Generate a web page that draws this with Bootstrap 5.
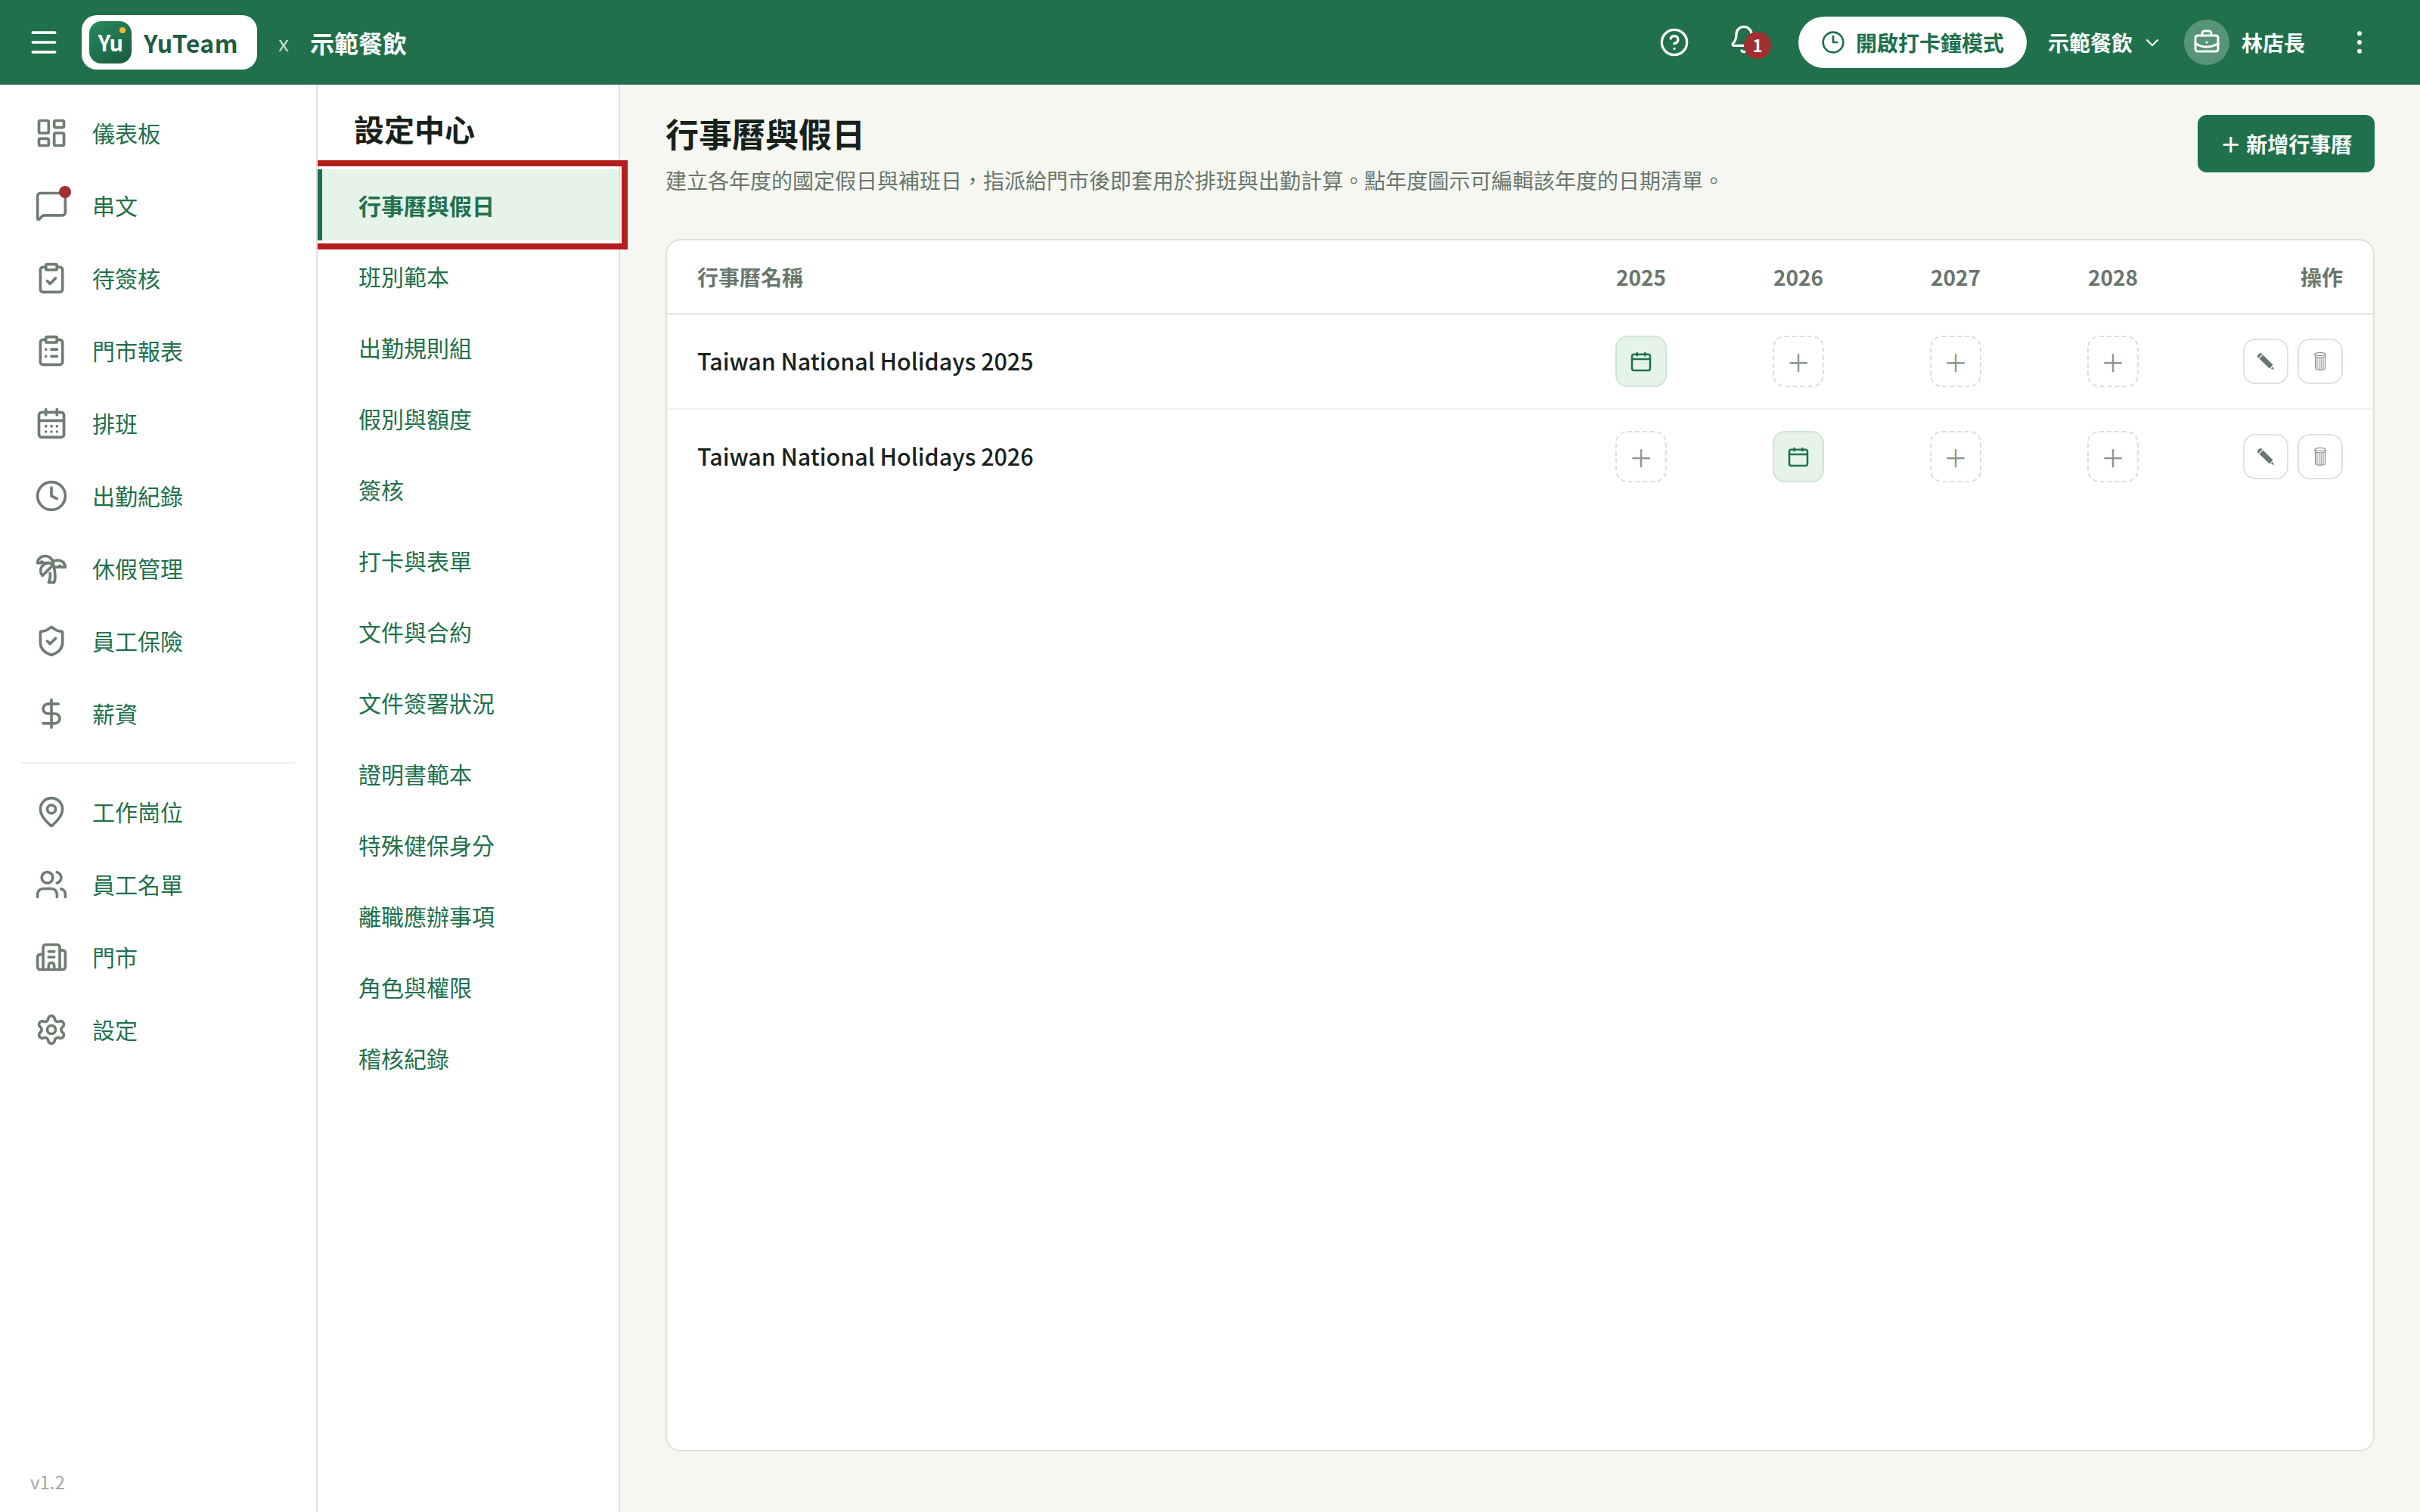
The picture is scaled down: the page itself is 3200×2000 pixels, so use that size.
<!DOCTYPE html>
<html lang="zh-Hant">
<head>
<meta charset="utf-8">
<title>行事曆與假日 - YuTeam</title>
<meta name="viewport" content="width=device-width, initial-scale=1">
<link rel="stylesheet" href="https://cdn.jsdelivr.net/npm/bootstrap@5.3.0/dist/css/bootstrap.min.css">
<style>
:root{--brand:#20704c;--ink:#17211b;--muted:#69766c;--line:#dce4da;--soft:#e6f3ea}
html{font-size:32px}
body{font-family:"Noto Sans CJK TC","Noto Sans",sans-serif;font-size:30px;line-height:1.5;color:var(--ink);background:#f6f7f2;height:2000px;overflow:hidden}
svg.ico{fill:none;stroke:currentColor;stroke-width:2;stroke-linecap:round;stroke-linejoin:round;width:44px;height:44px;flex:none;display:block}
.topbar{height:112px;background:var(--brand);color:#fff;padding:0 60px 0 36px;flex:none}
.brandbox{height:72px;width:232px;background:#fff;border-radius:20px;margin-left:28px;padding-left:10px}
.brandmark{width:56px;height:56px;border-radius:16px;background:linear-gradient(145deg,#268a5f,#1b5a3c);font-size:29px;font-weight:700;letter-spacing:-.5px}
.branddot{position:absolute;width:8px;height:8px;border-radius:50%;background:#f2b940;right:8px;top:8px}
.brandname{color:#1b5e41;font-weight:700;font-size:32px;letter-spacing:.5px;margin-left:16px}
.times{margin-left:28px;font-size:28px;color:#c7dbd1}
.tenant{margin-left:28px;font-size:32px}
.clockbtn{height:68px;width:302px;gap:14px;background:#fff;color:var(--brand);border-radius:34px;font-weight:700;font-size:28px}
.bell{margin:0 52px}
.bell .ico{margin-top:-8px}
.count{position:absolute;left:20px;top:2px;width:36px;height:36px;border-radius:50%;background:#a12f2f;font-size:22px;font-weight:700;line-height:35px;text-align:center}
.avatar{width:60px;height:60px;border-radius:50%;background:rgba(255,255,255,.25);margin:0 16px 0 30px}
.topbar b.user{font-size:28px}
.company{margin:0 14px 0 28px}
.more{margin-left:52px}
svg.s40{width:40px;height:40px}svg.s36{width:36px;height:36px}svg.s32{width:32px;height:32px}svg.s24{width:24px;height:24px}
.side{width:420px;border-right:2px solid var(--line);background:#fff;padding:16px 28px 0;flex:none}
.side a{height:96px;display:flex;align-items:center;gap:32px;padding:0 0 2px 18px;color:var(--brand);text-decoration:none}
.side .ico{color:#6f7c72;margin-top:2px}
.side hr{margin:16px 0;border:0;border-top:2px solid #eef0ee;opacity:1}
.ver{font-size:24px;line-height:36px;color:#a4aaa5;padding:0 0 22px 12px}
.reddot{position:absolute;width:16px;height:16px;border-radius:50%;background:#a12f2f;right:-4px;top:-2px}
.sub{width:400px;border-right:2px solid var(--line);background:#fff;flex:none}
.sub h2{font-size:40px;font-weight:700;line-height:60px;margin:28px 0 24px 48px}
.sub a{height:94px;display:flex;align-items:center;padding-left:54px;color:var(--brand);text-decoration:none}
.sub a.current{background:var(--soft);border-left:6px solid var(--brand);padding-left:48px;font-weight:700;outline:8px solid #b71c1c;outline-offset:4px;clip-path:inset(-12px -14px -12px 0);position:relative}
.page-main{padding:40px 60px 80px}
.page-main h1{font-size:44px;font-weight:700;line-height:52px;margin:-2px 0 0}
.desc{font-size:28px;line-height:42px;color:var(--muted);margin:15px 0 57px}
.addbtn{width:234px;height:76px;border-radius:12px;background:var(--brand);color:#fff;font-size:28px;font-weight:700;flex:none}
.panel{border:2px solid var(--line);border-radius:20px;background:#fff}
.line{display:grid;grid-template-columns:1fr 208px 208px 208px 208px 200px;align-items:center;padding:0 40px;height:126px;border-bottom:2px solid #eef0ee}
.line:last-child{border-color:transparent}
.line.top{height:98px;border-color:var(--line);color:var(--muted);font-size:28px;font-weight:700}
.calname{font-size:30.4px;font-weight:500}
.cellbox{width:68px;height:68px;border-radius:16px;border:2px dashed #dcdfd8;color:#8a938c;font-size:32px;font-weight:400}
.cellbox.on{border:2px solid #cde6d8;background:var(--soft);color:var(--brand)}
.cellbox.on .ico{stroke-width:1.9;stroke-linecap:butt}
.ops{gap:12px}
.opbtn{width:60px;height:60px;border-radius:16px;border:2px solid var(--line);color:var(--muted)}
</style>
<script src="https://cdn.jsdelivr.net/npm/bootstrap@5.3.0/dist/js/bootstrap.bundle.min.js"></script>
</head>
<body class="d-flex flex-column">
<header class="topbar d-flex align-items-center">
  <svg class="ico" viewBox="0 0 24 24"><path d="M4 5h16M4 12h16M4 19h16"/></svg>
  <div class="brandbox d-flex align-items-center">
    <div class="brandmark d-flex align-items-center justify-content-center position-relative">Yu<i class="branddot"></i></div>
    <span class="brandname">YuTeam</span>
  </div>
  <span class="times">x</span>
  <b class="tenant">示範餐飲</b>
  <div class="d-flex align-items-center ms-auto">
    <svg class="ico s40" viewBox="0 0 24 24"><circle cx="12" cy="12" r="10"/><path d="M9.09 9a3 3 0 0 1 5.83 1c0 2-3 3-3 3M12 17h.01"/></svg>
    <div class="bell position-relative"><svg class="ico s40" viewBox="0 0 24 24"><path d="M10.268 21a2 2 0 0 0 3.464 0M3.262 15.326A1 1 0 0 0 4 17h16a1 1 0 0 0 .74-1.673C19.41 13.956 18 12.499 18 8A6 6 0 0 0 6 8c0 4.499-1.411 5.956-2.738 7.326"/></svg><span class="count">1</span></div>
    <div class="clockbtn d-flex align-items-center justify-content-center"><svg class="ico s32" viewBox="0 0 24 24"><circle cx="12" cy="12" r="10"/><path d="M12 6v6h4"/></svg>開啟打卡鐘模式</div>
    <b class="user company">示範餐飲</b>
    <svg class="ico s24" viewBox="0 0 24 24"><path d="m5 9 7 7 7-7"/></svg>
    <div class="avatar d-flex align-items-center justify-content-center"><svg class="ico s36" viewBox="0 0 24 24"><path d="M12 12h.01M16 6V4a2 2 0 0 0-2-2h-4a2 2 0 0 0-2 2v2M22 13a18.15 18.15 0 0 1-20 0"/><rect width="20" height="14" x="2" y="6" rx="2"/></svg></div>
    <b class="user">林店長</b>
    <svg class="ico s40 more" viewBox="0 0 24 24"><g fill="currentColor" stroke-width="1.6"><circle cx="12" cy="5" r="1"/><circle cx="12" cy="12" r="1"/><circle cx="12" cy="19" r="1"/></g></svg>
  </div>
</header>
<div class="d-flex flex-grow-1">
<nav class="side d-flex flex-column">
  <a href="#"><svg class="ico" viewBox="0 0 24 24"><rect width="7" height="9" x="3" y="3" rx="1"/><rect width="7" height="5" x="14" y="3" rx="1"/><rect width="7" height="9" x="14" y="12" rx="1"/><rect width="7" height="5" x="3" y="16" rx="1"/></svg>儀表板</a>
  <a href="#"><span class="position-relative"><svg class="ico" viewBox="0 0 24 24"><path d="M22 17a2 2 0 0 1-2 2H6.828a2 2 0 0 0-1.414.586l-2.202 2.202A.71.71 0 0 1 2 21.286V5a2 2 0 0 1 2-2h16a2 2 0 0 1 2 2z"/></svg><i class="reddot"></i></span>串文</a>
  <a href="#"><svg class="ico" viewBox="0 0 24 24"><rect width="8" height="4" x="8" y="2" rx="1"/><path d="M16 4h2a2 2 0 0 1 2 2v14a2 2 0 0 1-2 2H6a2 2 0 0 1-2-2V6a2 2 0 0 1 2-2h2M9 14l2 2 4-4"/></svg>待簽核</a>
  <a href="#"><svg class="ico" viewBox="0 0 24 24"><rect width="8" height="4" x="8" y="2" rx="1"/><path d="M16 4h2a2 2 0 0 1 2 2v14a2 2 0 0 1-2 2H6a2 2 0 0 1-2-2V6a2 2 0 0 1 2-2h2M12 11h4M12 16h4M8 11h.01M8 16h.01"/></svg>門市報表</a>
  <a href="#"><svg class="ico" viewBox="0 0 24 24"><path d="M8 2v4M16 2v4M3 10h18M8 14h.01M12 14h.01M16 14h.01M8 18h.01M12 18h.01M16 18h.01"/><rect width="18" height="18" x="3" y="4" rx="2"/></svg>排班</a>
  <a href="#"><svg class="ico" viewBox="0 0 24 24"><circle cx="12" cy="12" r="10"/><path d="M12 6v6l4 2"/></svg>出勤紀錄</a>
  <a href="#"><svg class="ico" viewBox="0 0 24 24"><path d="M13 8c0-2.76-2.46-5-5.5-5S2 5.24 2 8h2l1-1 1 1h4"/><path d="M13 7.14A5.82 5.82 0 0 1 16.5 6c3.04 0 5.5 2.24 5.5 5h-3l-1-1-1 1h-3"/><path d="M5.89 9.71c-2.15 2.15-2.3 5.47-.35 7.43l4.24-4.25.7-.7.71-.71 2.12-2.12c-1.95-1.96-5.27-1.8-7.42.35"/><path d="M11 15.5c.5 2.5-.17 4.5-1 6.5h4c2-5.5-.5-12-1-14"/></svg>休假管理</a>
  <a href="#"><svg class="ico" viewBox="0 0 24 24"><path d="M20 13c0 5-3.5 7.5-7.66 8.95a1 1 0 0 1-.67-.01C7.5 20.5 4 18 4 13V6a1 1 0 0 1 1-1c2 0 4.5-1.2 6.24-2.72a1.17 1.17 0 0 1 1.52 0C14.51 3.81 17 5 19 5a1 1 0 0 1 1 1z"/><path d="m9 12 2 2 4-4"/></svg>員工保險</a>
  <a href="#"><svg class="ico" viewBox="0 0 24 24"><path d="M12 2v20M17 5H9.5a3.5 3.5 0 0 0 0 7h5a3.5 3.5 0 0 1 0 7H6"/></svg>薪資</a>
  <hr>
  <a href="#"><svg class="ico" viewBox="0 0 24 24"><path d="M20 10c0 4.993-5.539 10.193-7.399 11.799a1 1 0 0 1-1.202 0C9.539 20.193 4 14.993 4 10a8 8 0 0 1 16 0"/><circle cx="12" cy="10" r="3"/></svg>工作崗位</a>
  <a href="#"><svg class="ico" viewBox="0 0 24 24"><path d="M16 21v-2a4 4 0 0 0-4-4H6a4 4 0 0 0-4 4v2M16 3.128a4 4 0 0 1 0 7.744M22 21v-2a4 4 0 0 0-3-3.87"/><circle cx="9" cy="7" r="4"/></svg>員工名單</a>
  <a href="#"><svg class="ico" viewBox="0 0 24 24"><path d="M10 12h4M10 8h4M14 21v-3a2 2 0 0 0-4 0v3M6 10H4a2 2 0 0 0-2 2v7a2 2 0 0 0 2 2h16a2 2 0 0 0 2-2V9a2 2 0 0 0-2-2h-2M6 21V5a2 2 0 0 1 2-2h8a2 2 0 0 1 2 2v16"/></svg>門市</a>
  <a href="#"><svg class="ico" viewBox="0 0 24 24"><path d="M9.671 4.136a2.34 2.34 0 0 1 4.659 0 2.34 2.34 0 0 0 3.319 1.915 2.34 2.34 0 0 1 2.33 4.033 2.34 2.34 0 0 0 0 3.831 2.34 2.34 0 0 1-2.33 4.033 2.34 2.34 0 0 0-3.319 1.915 2.34 2.34 0 0 1-4.659 0 2.34 2.34 0 0 0-3.32-1.915 2.34 2.34 0 0 1-2.33-4.033 2.34 2.34 0 0 0 0-3.831A2.34 2.34 0 0 1 6.35 6.051a2.34 2.34 0 0 0 3.319-1.915"/><circle cx="12" cy="12" r="3"/></svg>設定</a>
  <span class="ver mt-auto">v1.2</span>
</nav>
<nav class="sub">
  <h2>設定中心</h2>
  <a class="current" href="#">行事曆與假日</a>
  <a href="#">班別範本</a><a href="#">出勤規則組</a><a href="#">假別與額度</a><a href="#">簽核</a><a href="#">打卡與表單</a><a href="#">文件與合約</a><a href="#">文件簽署狀況</a><a href="#">證明書範本</a><a href="#">特殊健保身分</a><a href="#">離職應辦事項</a><a href="#">角色與權限</a><a href="#">稽核紀錄</a>
</nav>
<main class="page-main flex-grow-1 d-flex flex-column">
  <div class="d-flex justify-content-between align-items-start">
    <div><h1>行事曆與假日</h1><p class="desc">建立各年度的國定假日與補班日，指派給門市後即套用於排班與出勤計算。點年度圖示可編輯該年度的日期清單。</p></div>
    <div class="addbtn d-flex align-items-center justify-content-center">＋ 新增行事曆</div>
  </div>
  <section class="panel flex-grow-1" id="panel">
    <div class="line top"><span>行事曆名稱</span><span class="text-center">2025</span><span class="text-center">2026</span><span class="text-center">2027</span><span class="text-center">2028</span><span class="text-end">操作</span></div>
  </section>
</main>
</div>
<script>
const cal='<div class="cellbox on mx-auto d-flex align-items-center justify-content-center"><svg class="ico s32" viewBox="0 0 24 24"><path d="M8 3v4M16 3v4M3 9.7h18"/><rect width="18" height="16" x="3" y="5" rx="2"/></svg></div>';
const add='<div class="cellbox mx-auto d-flex align-items-center justify-content-center">＋</div>';
const pen='<svg width="24" height="24" viewBox="0 0 24 24" fill="currentColor"><path d="M1 6.5C.5 3.5 3 .8 6.5 1.2L7.5 2.4 2.300 7.7zM8.500 3.500 21.500 16.500 17 21.500 3.500 8.600z"/><path d="M21.300 18.700 23 23.200 18.800 21.500z"/></svg>';
const bin='<svg width="18" height="26" viewBox="0 0 18 26" fill="none" stroke="currentColor" stroke-width="1"><ellipse cx="9" cy="3.500" rx="7" ry="2"/><path d="M2 3.500v2.500c0 2.700 14 2.700 14 0V3.500M2.500 7v15.500c0 2.300 13 2.300 13 0V7"/><path stroke="#9da8ae" stroke-width="1.300" d="M5 8.500v14.500M7.700 9v15M10.300 9v15M13 8.500v14.500"/></svg>';
[2025,2026].forEach(y=>{
  document.getElementById('panel').insertAdjacentHTML('beforeend','<div class="line"><span class="calname">Taiwan National Holidays '+y+'</span>'+[2025,2026,2027,2028].map(c=>c===y?cal:add).join('')+'<div class="ops d-flex justify-content-end"><span class="opbtn d-flex align-items-center justify-content-center">'+pen+'</span><span class="opbtn d-flex align-items-center justify-content-center">'+bin+'</span></div></div>');
});
</script>
</body>
</html>
